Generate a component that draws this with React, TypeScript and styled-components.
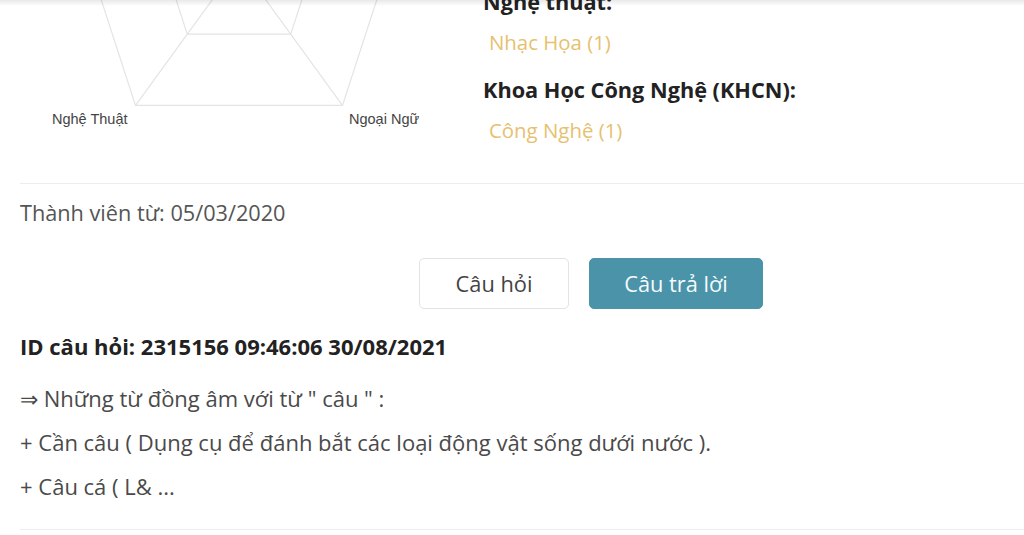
import styled, { createGlobalStyle } from "styled-components";

const GlobalStyle = createGlobalStyle`
  html, body {
    margin: 0;
    padding: 0;
    background: #fff;
    overflow: hidden;
  }

  body {
    font-family: "Open Sans", "Noto Sans", sans-serif;
    color: #444;
  }
`;

const StyledPage = styled.main`
  padding-left: 20px;
  width: 1004px;
`;

const StyledTopShadow = styled.div`
  position: fixed;
  top: 0;
  left: 0;
  right: 0;
  height: 6px;
  background: linear-gradient(to bottom, rgba(0, 0, 0, 0.09), rgba(0, 0, 0, 0));
  pointer-events: none;
`;

const StyledProfileSection = styled.section`
  display: flex;
  margin-top: -12px;
  padding-bottom: 19px;
  border-bottom: 1px solid #ededed;
`;

const StyledChartColumn = styled.div`
  width: 440px;
  margin-top: 12px;
  flex-shrink: 0;
`;

const StyledCategoryColumn = styled.div`
  padding-left: 23px;
`;

const StyledCategoryTitle = styled.h4`
  margin: 0;
  font-size: 21.7px;
  line-height: 28px;
  font-weight: 700;
  color: #222;
`;

const StyledCategoryItem = styled.p`
  margin: 12px 0 20px;
  padding-left: 6px;
  font-size: 20.4px;
  line-height: 28px;
  color: #e6c170;
`;

const StyledMemberSince = styled.p`
  margin: 15px 0 0;
  font-size: 21.7px;
  line-height: 28px;
  color: #555;
`;

const StyledTabs = styled.div`
  display: flex;
  gap: 20px;
  margin-top: 31px;
  padding-left: 399px;
`;

const StyledTabButton = styled.button<{ $active?: boolean }>`
  height: 51px;
  width: ${({ $active }) => ($active ? "174px" : "150px")};
  border-radius: 5px;
  border: 1px solid ${({ $active }) => ($active ? "#4a93a8" : "#e3e3e3")};
  background: ${({ $active }) => ($active ? "#4a93a8" : "#fff")};
  color: ${({ $active }) => ($active ? "#f4fbfd" : "#444")};
  font-family: inherit;
  font-size: 21.8px;
  padding: 0;
  cursor: pointer;
`;

const StyledQuestionMeta = styled.h5`
  margin: 23px 0 0;
  font-size: 22px;
  line-height: 28px;
  font-weight: 700;
  color: #222;
`;

const StyledQuestionBody = styled.div`
  margin-top: 24px;
  padding-bottom: 29px;
  border-bottom: 1px solid #ededed;
`;

const StyledQuestionLine = styled.p`
  margin: 0 0 16px;
  font-size: 22px;
  line-height: 28px;
  color: #4a4a4a;

  &:last-child {
    margin-bottom: 0;
  }
`;

// radar chart, top part scrolled off the page
const cx = 219;
const cy = -37;
const angles = [126, 54, -18, -90, 198];

function pentagon(r: number) {
  return angles
    .map((deg) => {
      const a = (deg * Math.PI) / 180;
      return `${(cx + r * Math.cos(a)).toFixed(1)},${(cy + r * Math.sin(a)).toFixed(1)}`;
    })
    .join(" ");
}

function RadarChart() {
  return (
    <svg width="440" height="130" viewBox="0 0 440 130">
      <g fill="none" stroke="#e4e4e4" strokeWidth="1.2">
        <polygon points={pentagon(176)} />
        <polygon points={pentagon(88)} />
        {angles.map((deg) => {
          const a = (deg * Math.PI) / 180;
          return (
            <line
              key={deg}
              x1={cx}
              y1={cy}
              x2={cx + 176 * Math.cos(a)}
              y2={cy + 176 * Math.sin(a)}
            />
          );
        })}
      </g>
      <g fontFamily="'Liberation Sans', Arial, sans-serif" fontSize="14.5" fill="#444">
        <text x="32" y="124">Nghệ Thuật</text>
        <text x="329" y="124">Ngoại Ngữ</text>
      </g>
    </svg>
  );
}

const categories = [
  { title: "Nghệ thuật:", item: "Nhạc Họa (1)" },
  { title: "Khoa Học Công Nghệ (KHCN):", item: "Công Nghệ (1)" },
];

const questionLines = [
  "⇒ Những từ đồng âm với từ \" câu \" :",
  "+ Cần câu ( Dụng cụ để đánh bắt các loại động vật sống dưới nước ).",
  "+ Câu cá ( L& ...",
];

function App() {
  return (
    <>
      <GlobalStyle />
      <StyledTopShadow />
      <StyledPage>
        <StyledProfileSection>
          <StyledChartColumn>
            <RadarChart />
          </StyledChartColumn>
          <StyledCategoryColumn>
            {categories.map((category) => (
              <div key={category.title}>
                <StyledCategoryTitle>{category.title}</StyledCategoryTitle>
                <StyledCategoryItem>{category.item}</StyledCategoryItem>
              </div>
            ))}
          </StyledCategoryColumn>
        </StyledProfileSection>

        <StyledMemberSince>Thành viên từ: 05/03/2020</StyledMemberSince>

        <StyledTabs>
          <StyledTabButton>Câu hỏi</StyledTabButton>
          <StyledTabButton $active>Câu trả lời</StyledTabButton>
        </StyledTabs>

        <StyledQuestionMeta>ID câu hỏi: 2315156 09:46:06 30/08/2021</StyledQuestionMeta>

        <StyledQuestionBody>
          {questionLines.map((line) => (
            <StyledQuestionLine key={line}>{line}</StyledQuestionLine>
          ))}
        </StyledQuestionBody>
      </StyledPage>
    </>
  );
}

export default App;
